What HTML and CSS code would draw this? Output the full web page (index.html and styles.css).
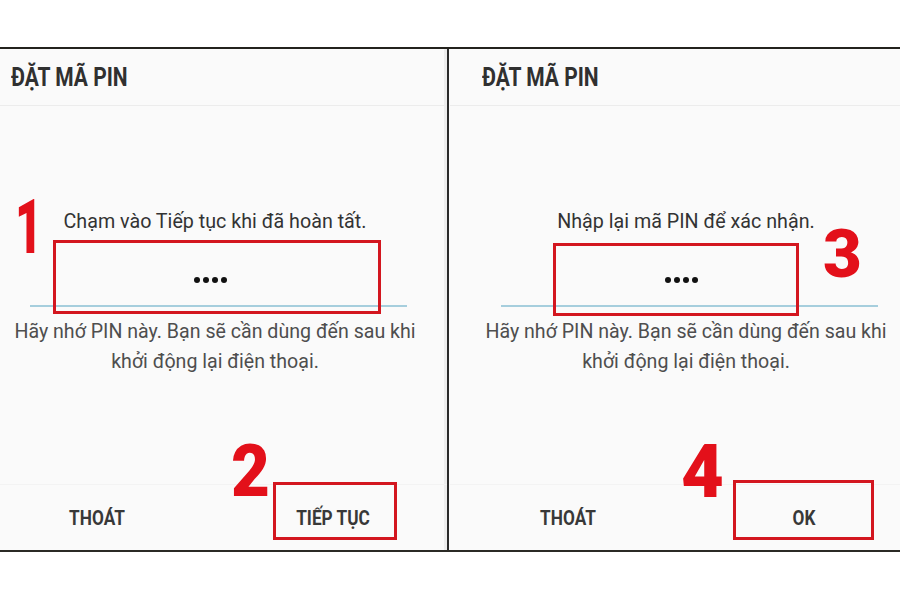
FILE: index.html
```html
<!DOCTYPE html>
<html lang="vi">
<head>
<meta charset="utf-8">
<title>Đặt mã PIN</title>
<link rel="stylesheet" href="styles.css">
</head>
<body>
<div class="screen">
  <section class="panel panel-left">
    <div class="dialog">
      <header class="dialog-head"><h1 class="title">ĐẶT MÃ PIN</h1></header>
      <div class="dialog-body">
        <p class="prompt">Chạm vào Tiếp tục khi đã hoàn tất.</p>
        <div class="dots"><span></span><span></span><span></span><span></span></div>
        <div class="field-line"></div>
        <p class="hint">Hãy nhớ PIN này. Bạn sẽ cần dùng đến sau khi<br>khởi động lại điện thoại.</p>
      </div>
      <footer class="dialog-foot">
        <div class="btn">THOÁT</div>
        <div class="btn">TIẾP TỤC</div>
      </footer>
    </div>
    <div class="mark mark-field-l"></div>
    <div class="mark mark-btn-l"></div>
    <div class="step step-1">1</div>
    <div class="step step-2">2</div>
  </section>
  <section class="panel panel-right">
    <div class="dialog">
      <header class="dialog-head"><h1 class="title">ĐẶT MÃ PIN</h1></header>
      <div class="dialog-body">
        <p class="prompt">Nhập lại mã PIN để xác nhận.</p>
        <div class="dots"><span></span><span></span><span></span><span></span></div>
        <div class="field-line"></div>
        <p class="hint">Hãy nhớ PIN này. Bạn sẽ cần dùng đến sau khi<br>khởi động lại điện thoại.</p>
      </div>
      <footer class="dialog-foot">
        <div class="btn">THOÁT</div>
        <div class="btn">OK</div>
      </footer>
    </div>
    <div class="mark mark-field-r"></div>
    <div class="mark mark-btn-r"></div>
    <div class="step step-3">3</div>
    <div class="step step-4">4</div>
  </section>
</div>
</body>
</html>
```
FILE: styles.css
```css
html, body {
  margin: 0;
  padding: 0;
  background: #ffffff;
}
body {
  font-family: Roboto, "Liberation Sans", sans-serif;
  width: 900px;
  height: 600px;
  overflow: hidden;
}
.screen {
  margin-top: 47px;
  height: 501px;
  border-top: 2px solid #23221d;
  border-bottom: 2px solid #2b2a25;
  display: flex;
  background: #fafafa;
}
.panel {
  position: relative;
  overflow: hidden;
  height: 100%;
}
.panel-left {
  width: 447px;
  border-right: 2px solid #2a2a2a;
  box-shadow: inset -3px 0 0 #ededed;
}
.panel-right {
  flex: 1;
}
.dialog {
  width: 472px;
  height: 100%;
  display: flex;
  flex-direction: column;
}
.panel-left .dialog { margin-left: -21px; }
.panel-right .dialog { margin-left: 1px; }

.dialog-head {
  height: 56px;
  border-bottom: 1px solid #ececec;
  display: flex;
  align-items: center;
  padding-left: 32px;
}
.title {
  margin: 0;
  font-size: 25px;
  font-weight: 700;
  color: #303030;
  transform: scaleX(0.84);
  transform-origin: left center;
  white-space: nowrap;
}
.dialog-body {
  flex: 1;
  padding-top: 104px;
  text-align: center;
}
.prompt {
  margin: 0;
  font-size: 19.7px;
  line-height: 24px;
  color: #333333;
}
.dots {
  margin-top: 43px;
  height: 6px;
  display: flex;
  justify-content: center;
  gap: 3px;
  padding-right: 10px;
}
.dots span {
  width: 6px;
  height: 6px;
  border-radius: 50%;
  background: #111111;
}
.field-line {
  margin: 22px 0 0 51px;
  width: 377px;
  height: 2px;
  background: #a6cedd;
}
.hint {
  margin: 10px -20px 0;
  font-size: 19.6px;
  line-height: 30px;
  color: #4e4e4e;
  white-space: nowrap;
}
.dialog-foot {
  height: 65px;
  display: grid;
  grid-template-columns: 1fr 1fr;
  align-items: center;
  border-top: 1px solid #f3f3f3;
}
.btn {
  text-align: center;
  font-size: 20.5px;
  font-weight: 700;
  color: #383838;
  transform: scaleX(0.84);
}

.mark {
  position: absolute;
  box-sizing: border-box;
  border: 3px solid #d3161f;
}
.mark-field-l { left: 53px; top: 191px; width: 328px; height: 74px; }
.mark-btn-l   { left: 273px; top: 433px; width: 124px; height: 58px; }
.mark-field-r { left: 104px; top: 194px; width: 246px; height: 73px; }
.mark-btn-r   { left: 284px; top: 431px; width: 141px; height: 60px; }

.step {
  position: absolute;
  font-family: Roboto, "Liberation Sans", sans-serif;
  font-weight: 900;
  line-height: 1;
  color: #e3101a;
}
.step-1 { left: 15px; top: 140px; font-size: 76px; transform: scaleX(0.62); transform-origin: left top; }
.step-2 { left: 231px; top: 386px; font-size: 73px; transform: scaleX(0.92); transform-origin: left top; }
.step-3 { left: 374px; top: 172px; font-size: 67px; }
.step-4 { left: 232px; top: 386px; font-size: 74px; }
```
